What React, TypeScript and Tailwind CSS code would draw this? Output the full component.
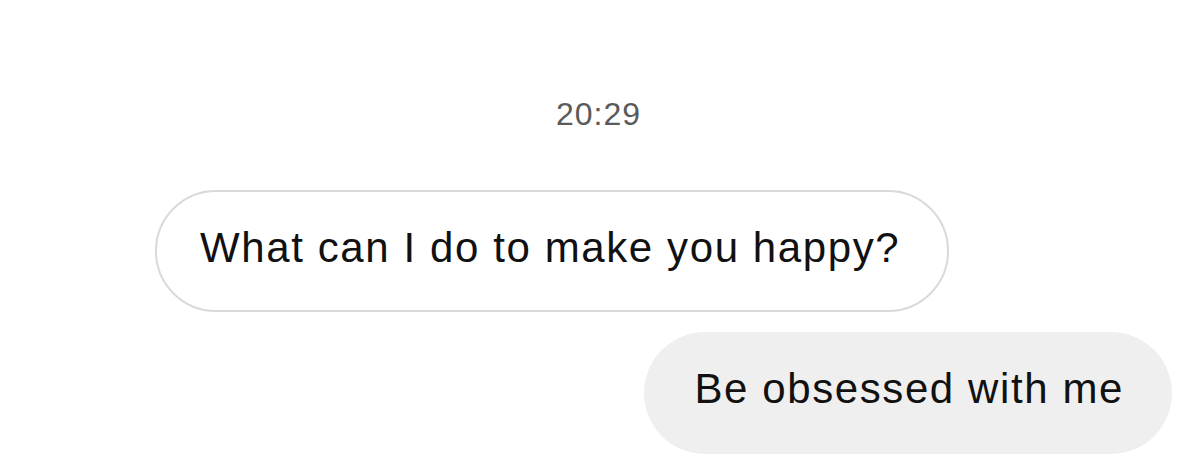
import React from 'react';

export default function App() {
  return (
    <div
      className="w-[1200px] h-[459px] bg-white overflow-hidden flex flex-col"
      style={{ fontFamily: '"Liberation Sans", Arial, sans-serif' }}
    >
      {/* Timestamp */}
      <div className="pt-[98px] flex justify-center">
        <span className="ml-[-3px] text-[32px] leading-[32px] tracking-[1px] text-[#5a5a5a]">20:29</span>
      </div>

      {/* Incoming message */}
      <div className="mt-[60px] ml-[155px] flex">
        <div className="h-[122px] pl-[43px] pr-[47px] pb-[7px] flex items-center rounded-full border-2 border-[#d9d9d9] bg-white text-[42px] leading-[46px] tracking-[1.6px] text-[#111]">
          What can I do to make you happy?
        </div>
      </div>

      {/* Outgoing message */}
      <div className="mt-[20px] mr-[28px] flex justify-end">
        <div className="h-[122px] pl-[50px] pr-[48px] pb-[9px] flex items-center rounded-full bg-[#efefef] text-[42px] leading-[46px] tracking-[1.6px] text-[#111]">
          Be obsessed with me
        </div>
      </div>
    </div>
  );
}
